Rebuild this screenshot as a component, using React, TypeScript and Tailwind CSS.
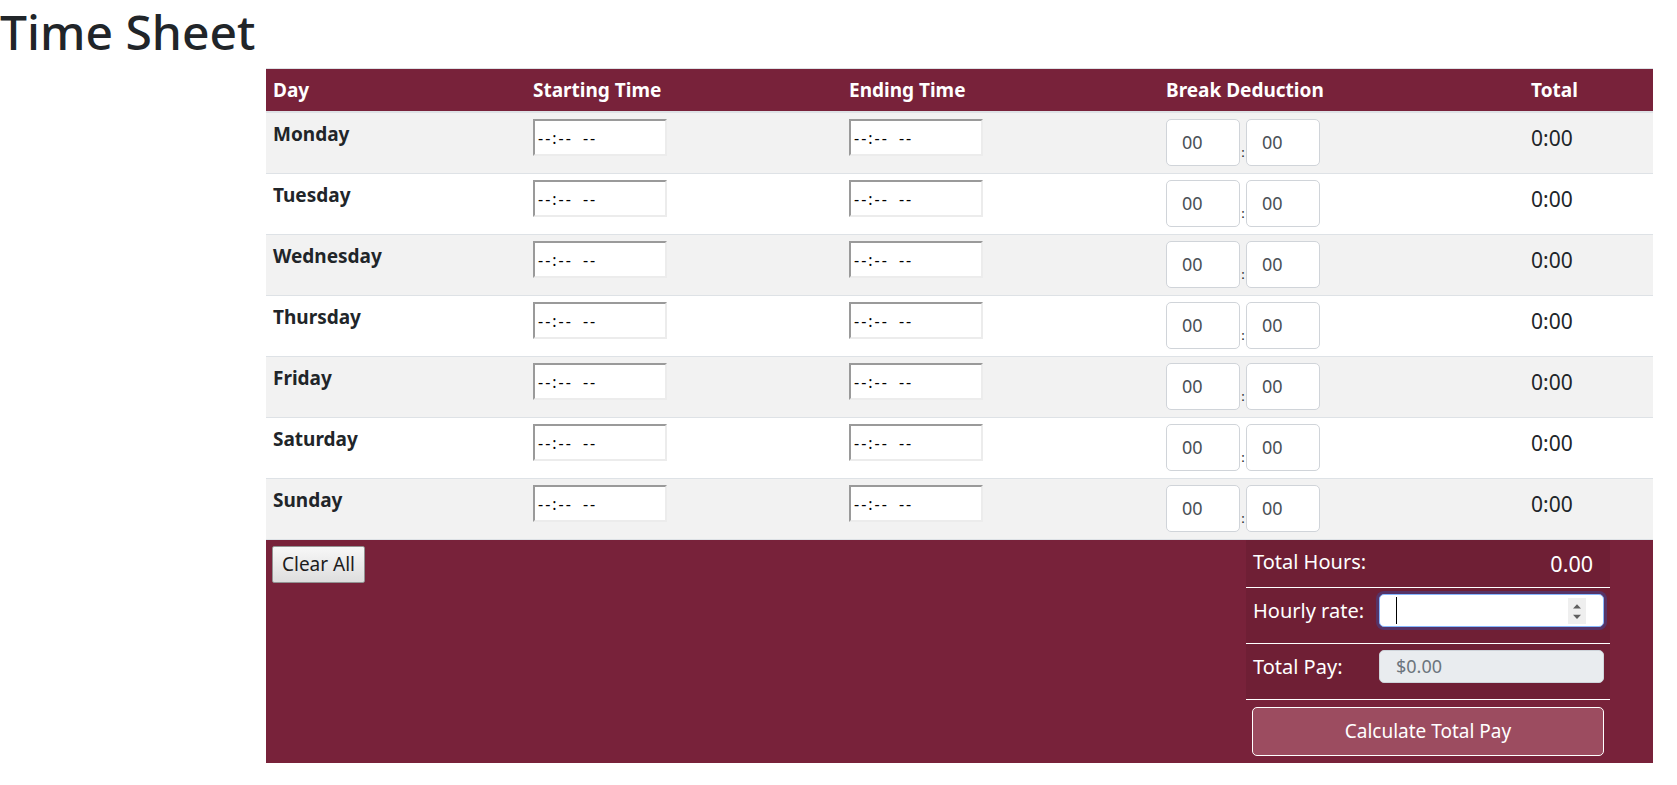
import React from 'react';

const days = ['Monday', 'Tuesday', 'Wednesday', 'Thursday', 'Friday', 'Saturday', 'Sunday'];

function TimeField() {
  return (
    <div className="w-[134px] h-[37px] bg-white border-2 border-t-[#9a9a9a] border-l-[#9a9a9a] border-r-[#ececec] border-b-[#ececec] flex items-center pl-[3px] text-[16px] text-black leading-none">
      <span className="tracking-[2px]">--:--</span>
      <span className="ml-[10px] tracking-[2px]">--</span>
    </div>
  );
}

function BreakField() {
  return (
    <div className="w-[74px] h-[47px] bg-white border border-[#d0d4d9] rounded-[5px] flex items-center pl-[15px] text-[18px] text-[#495057]">
      00
    </div>
  );
}

function Spinner() {
  return (
    <svg width="18" height="26" viewBox="0 0 18 26" className="block">
      <rect width="18" height="26" fill="#efefef" />
      <path d="M5 10.5 L9 6.3 L13 10.5 Z" fill="#5f5f5f" />
      <path d="M5 16.8 L9 21 L13 16.8 Z" fill="#5f5f5f" />
    </svg>
  );
}

export default function App() {
  return (
    <div className="min-h-screen bg-white font-['Noto_Sans',sans-serif] text-[#212529]">
      <h1 className="m-0 text-[48px] leading-[64px] font-medium">Time Sheet</h1>

      <div className="ml-[266px] mt-[4px] w-[1387px]">
        {/* header */}
        <div className="grid grid-cols-[260px_316px_317px_365px_129px] h-[45px] items-center bg-[#78223a] border-t border-b-2 border-t-[#dee2e6] border-b-[#dee2e6] text-white font-bold text-[19px] leading-[28px]">
          <div className="px-[7px]">Day</div>
          <div className="px-[7px]">Starting Time</div>
          <div className="px-[7px]">Ending Time</div>
          <div className="px-[7px]">Break Deduction</div>
          <div className="px-[7px]">Total</div>
        </div>

        {/* day rows */}
        {days.map((day, i) => (
          <div
            key={day}
            className={
              'grid grid-cols-[260px_316px_317px_365px_129px] h-[61px] border-b border-[#dee2e6] ' +
              (i % 2 === 0 ? 'bg-[#f2f2f2]' : 'bg-white')
            }
          >
            <div className="px-[7px] pt-[7px] font-bold text-[19px] leading-[28px]">{day}</div>
            <div className="px-[7px] pt-[6px]">
              <TimeField />
            </div>
            <div className="px-[7px] pt-[6px]">
              <TimeField />
            </div>
            <div className="px-[7px] pt-[6px] flex items-start">
              <BreakField />
              <span className="w-[6px] text-center self-end mb-[14px] text-[13px] leading-none">:</span>
              <BreakField />
            </div>
            <div className="px-[7px] pt-[10px] text-[21px] leading-[31px]">0:00</div>
          </div>
        ))}

        {/* footer */}
        <div className="h-[223px] bg-[#78223a] flex justify-between">
          <div className="pl-[6px] pt-[6px]">
            <button className="w-[93px] h-[37px] border border-[#939393] rounded-[2px] bg-gradient-to-b from-[#f7f7f7] to-[#dedede] text-[19px] leading-none text-[#1c1c1c]">
              Clear All
            </button>
          </div>

          <div className="w-[364px] mr-[43px] text-white">
            <div className="h-[48px] bg-[#6f1f35] border-b border-white flex justify-between">
              <div className="pl-[7px] pt-[7px] text-[20px] leading-[30px]">Total Hours:</div>
              <div className="pr-[17px] pt-[9px] text-[21.5px] leading-[30px]">0.00</div>
            </div>

            <div className="h-[56px] bg-[#6f1f35] border-b border-white grid grid-cols-[126px_1fr]">
              <div className="pl-[7px] mt-[6px] h-[33px] flex items-center text-[20px] leading-[30px]">Hourly rate:</div>
              <div className="mt-[6px] mr-[6px] ml-[7px] h-[33px] bg-white border border-[#86b7fe] rounded-[5px] shadow-[0_0_0_3px_rgba(13,110,253,0.25)] flex items-center justify-between pl-[16px] pr-[17px]">
                <div className="w-[1px] h-[27px] bg-black" />
                <Spinner />
              </div>
            </div>

            <div className="h-[56px] bg-[#6f1f35] border-b border-white grid grid-cols-[126px_1fr]">
              <div className="pl-[7px] mt-[6px] h-[33px] flex items-center text-[20px] leading-[30px]">Total Pay:</div>
              <div className="mt-[6px] mr-[6px] ml-[7px] h-[33px] bg-[#e9ecef] border border-[#ced4da] rounded-[5px] flex items-center pl-[16px] text-[18px] text-[#6c757d]">
                $0.00
              </div>
            </div>

            <div className="px-[6px] pt-[7px]">
              <button className="w-full h-[49px] rounded-[5px] border border-white bg-[#9c4c60] text-white text-[19px] leading-none">
                Calculate Total Pay
              </button>
            </div>
          </div>
        </div>
      </div>
    </div>
  );
}
